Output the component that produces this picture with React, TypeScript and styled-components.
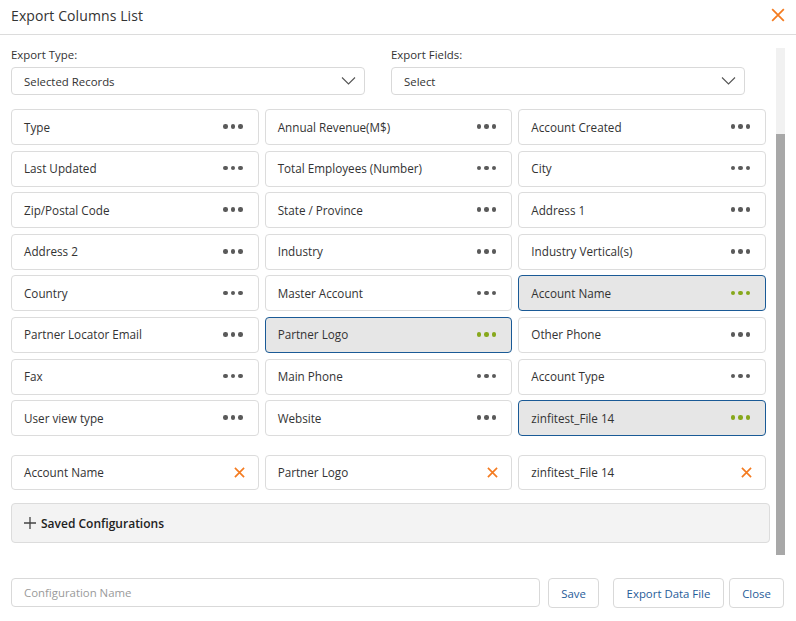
import React from "react";
import styled, { createGlobalStyle } from "styled-components";

const GlobalStyle = createGlobalStyle`
  html, body { margin: 0; padding: 0; background: #fff; }
  body { font-family: "Open Sans", "Noto Sans", sans-serif; color: #333; }
  * { box-sizing: border-box; }
`;

const Modal = styled.div`
  width: 796px;
  height: 621px;
  display: flex;
  flex-direction: column;
  background: #fff;
`;

const Header = styled.div`
  height: 35px;
  display: flex;
  align-items: center;
  justify-content: space-between;
  padding: 0 11px 4px 11px;
  border-bottom: 1px solid #dcdcdc;
`;

const Title = styled.h1`
  margin: 0;
  font-size: 14px;
  font-weight: 400;
  color: #333;
  letter-spacing: 0.1px;
`;

const CloseIcon = styled.button`
  border: 0;
  background: none;
  padding: 0;
  width: 14px;
  height: 14px;
  display: flex;
  cursor: pointer;
`;

const Body = styled.div`
  display: flex;
  gap: 6px;
  padding: 13px 11px 0 11px;
  height: 521px;
`;

const Content = styled.div`
  flex: 1;
  display: flex;
  flex-direction: column;
`;

const Rail = styled.div`
  width: 9px;
  height: 507px;
  background: #f1f1f1;
  display: flex;
  flex-direction: column;
  justify-content: flex-end;
`;

const Thumb = styled.div`
  height: 421px;
  background: #a8a8a8;
`;

const Filters = styled.div`
  display: grid;
  grid-template-columns: 354px 354px;
  column-gap: 26px;
`;

const Field = styled.div`
  display: flex;
  flex-direction: column;
  gap: 6px;
`;

const Label = styled.label`
  font-size: 11.4px;
  font-weight: 500;
  color: #333;
  line-height: 13px;
`;

const Select = styled.div`
  height: 28px;
  border: 1px solid #d9d9d9;
  border-radius: 4px;
  display: flex;
  align-items: center;
  justify-content: space-between;
  padding: 0 8px 0 12px;
  font-size: 11.4px;
  color: #333;
`;

const Columns = styled.div`
  margin-top: 14px;
  display: grid;
  grid-template-columns: repeat(3, 1fr);
  column-gap: 6px;
  row-gap: 5.6px;
  width: 755px;
`;

const Cell = styled.div<{ $active?: boolean }>`
  height: 36px;
  border: 1px solid ${(p) => (p.$active ? "#1a5a96" : "#dcdcdc")};
  background: ${(p) => (p.$active ? "#e6e6e6" : "#fff")};
  border-radius: 4px;
  display: flex;
  align-items: center;
  justify-content: space-between;
  padding: 0 15px 1px 12px;
  font-size: 11.7px;
  color: #333;
`;

const Dots = styled.span<{ $active?: boolean }>`
  display: flex;
  gap: 3px;
  span {
    width: 4.5px;
    height: 4.5px;
    border-radius: 50%;
    background: ${(p) => (p.$active ? "#87a81c" : "#5a5a5a")};
  }
`;

const Chosen = styled.div`
  margin-top: 19px;
  display: grid;
  grid-template-columns: repeat(3, 1fr);
  column-gap: 6px;
  width: 755px;
`;

const ChosenCell = styled.div`
  height: 35px;
  border: 1px solid #dcdcdc;
  border-radius: 4px;
  display: flex;
  align-items: center;
  justify-content: space-between;
  padding: 0 13px 1px 12px;
  font-size: 11.7px;
  color: #333;
`;

const Accordion = styled.div`
  margin-top: 13px;
  height: 40px;
  background: #f3f3f3;
  border: 1px solid #dcdcdc;
  border-radius: 4px;
  display: flex;
  align-items: center;
  gap: 5px;
  padding-left: 12px;
  font-size: 12px;
  font-weight: 600;
  color: #222;
`;

const Footer = styled.div`
  display: flex;
  align-items: flex-start;
  padding: 22px 11px 0 11px;
  flex: 1;
`;

const NameInput = styled.input`
  width: 529px;
  height: 29px;
  border: 1px solid #d9d9d9;
  border-radius: 4px;
  padding: 0 12px;
  font-family: inherit;
  font-size: 11.4px;
  color: #333;
  outline: none;
  &::placeholder { color: #9a9a9a; }
`;

const Button = styled.button<{ $gap: number; $width: number }>`
  height: 30px;
  width: ${(p) => p.$width}px;
  margin-left: ${(p) => p.$gap}px;
  padding: 0;
  background: #fff;
  border: 1px solid #d9d9d9;
  border-radius: 4px;
  font-family: inherit;
  font-size: 11.4px;
  color: #1f5c99;
  cursor: pointer;
`;

const XMark = ({ size, color, width }: { size: number; color: string; width: number }) => (
  <svg width={size} height={size} viewBox="0 0 12 12">
    <path d="M1 1L11 11M11 1L1 11" stroke={color} strokeWidth={width} strokeLinecap="butt" />
  </svg>
);

const Chevron = () => (
  <svg width="15" height="10" viewBox="0 0 15 10">
    <path d="M1 1.5L7.5 8L14 1.5" fill="none" stroke="#555" strokeWidth="1.1" />
  </svg>
);

const Plus = () => (
  <svg width="12" height="12" viewBox="0 0 12 12">
    <path d="M6 0V12M0 6H12" stroke="#444" strokeWidth="1.3" />
  </svg>
);

const MoreDots = ({ active }: { active?: boolean }) => (
  <Dots $active={active}>
    <span />
    <span />
    <span />
  </Dots>
);

const columns: { name: string; active?: boolean }[] = [
  { name: "Type" },
  { name: "Annual Revenue(M$)" },
  { name: "Account Created" },
  { name: "Last Updated" },
  { name: "Total Employees (Number)" },
  { name: "City" },
  { name: "Zip/Postal Code" },
  { name: "State / Province" },
  { name: "Address 1" },
  { name: "Address 2" },
  { name: "Industry" },
  { name: "Industry Vertical(s)" },
  { name: "Country" },
  { name: "Master Account" },
  { name: "Account Name", active: true },
  { name: "Partner Locator Email" },
  { name: "Partner Logo", active: true },
  { name: "Other Phone" },
  { name: "Fax" },
  { name: "Main Phone" },
  { name: "Account Type" },
  { name: "User view type" },
  { name: "Website" },
  { name: "zinfitest_File 14", active: true },
];

export default function App() {
  const chosen = columns.filter((c) => c.active).map((c) => c.name);
  return (
    <Modal>
      <GlobalStyle />
      <Header>
        <Title>Export Columns List</Title>
        <CloseIcon aria-label="Close">
          <XMark size={14} color="#f47b20" width={1.5} />
        </CloseIcon>
      </Header>
      <Body>
        <Content>
          <Filters>
            <Field>
              <Label>Export Type:</Label>
              <Select>
                Selected Records
                <Chevron />
              </Select>
            </Field>
            <Field>
              <Label>Export Fields:</Label>
              <Select>
                Select
                <Chevron />
              </Select>
            </Field>
          </Filters>
          <Columns>
            {columns.map((c) => (
              <Cell key={c.name} $active={c.active}>
                {c.name}
                <MoreDots active={c.active} />
              </Cell>
            ))}
          </Columns>
          <Chosen>
            {chosen.map((n) => (
              <ChosenCell key={n}>
                {n}
                <XMark size={11} color="#f47b20" width={1.8} />
              </ChosenCell>
            ))}
          </Chosen>
          <Accordion>
            <Plus />
            Saved Configurations
          </Accordion>
        </Content>
        <Rail>
          <Thumb />
        </Rail>
      </Body>
      <Footer>
        <NameInput placeholder="Configuration Name" />
        <Button $gap={8} $width={51}>Save</Button>
        <Button $gap={14} $width={111}>Export Data File</Button>
        <Button $gap={5} $width={55}>Close</Button>
      </Footer>
    </Modal>
  );
}
